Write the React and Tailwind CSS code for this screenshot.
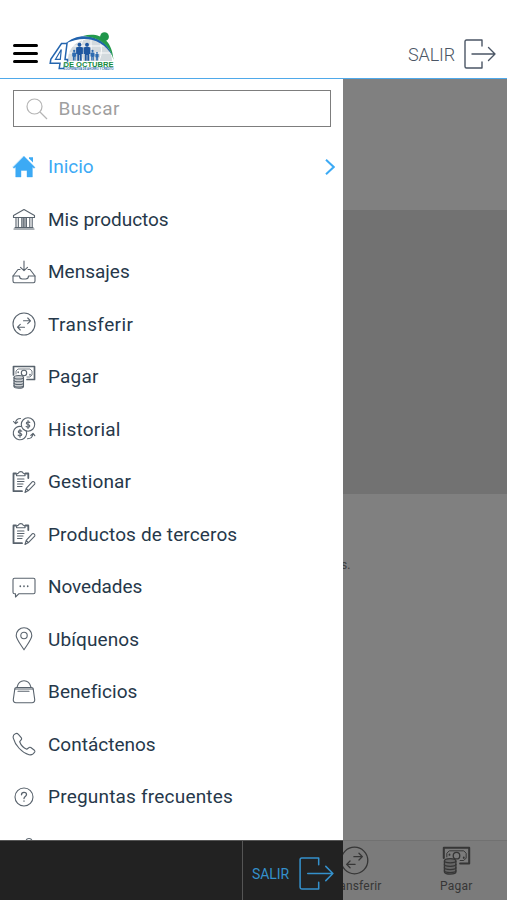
import { useState } from "react";

const FONT = "font-['Roboto','Noto_Sans',sans-serif]";

function Icon({ size = 24, className = "", children }) {
  return (
    <svg viewBox="0 0 24 24" width={size} height={size} fill="none" stroke="currentColor"
      strokeWidth="1.1" strokeLinecap="round" strokeLinejoin="round" className={`shrink-0 ${className}`}>
      {children}
    </svg>
  );
}

function HomeIcon() {
  return (
    <Icon>
      <path d="M12 1.3 23 12.4l-1 .9-1.6-1.3v10H15v-6.5H9V22H3.7V12L2 13.3l-1-.9Z" fill="currentColor" strokeWidth="0.4" />
      <path d="M17 2.3h4v5.2l-4-4Z" fill="currentColor" stroke="none" />
    </Icon>
  );
}

function BankIcon() {
  return (
    <Icon>
      <path d="M12 2.500 1.500 8.500v2h21v-2ZM2 22h20M3 20.500h18" />
      <path d="M4 11v9M6.300 11v9M9.800 11v9M11.300 11v9M12.900 11v9M14.400 11v9M17.800 11v9M20.200 11v9" />
    </Icon>
  );
}

function InboxIcon() {
  return (
    <Icon>
      <path d="M12 1v9.500M8.500 7.300l3.500 3.400 3.500-3.400" />
      <path d="M8 9.500H6L1 16v5c0 1 .5 1.700 1.500 1.700h19c1 0 1.500-.7 1.500-1.700v-5l-5-6.500h-2" />
      <path d="M1 16h6.500c0 1.800 1.200 3 2.800 3h3.400c1.600 0 2.800-1.200 2.800-3H23" />
    </Icon>
  );
}

function TransferIcon({ size }) {
  return (
    <Icon size={size}>
      <circle cx="12" cy="12" r="11" />
      <path d="M11.500 8.800H18M15.700 6l2.800 2.800-2.800 2.800M12.500 15.200H6M8.300 12.400l-2.800 2.800L8.300 18" />
    </Icon>
  );
}

function PayIcon({ size }) {
  return (
    <Icon size={size}>
      <path d="M1.500 10V1.500h21v13H15" strokeWidth="1.700" />
      <path d="M4 9V6l2-2h12l2 2v4l-2 2h-3" strokeWidth="0.800" />
      <circle cx="12" cy="8" r="2.700" />
      <path d="M6.200 7v.4M18 9.500v.4" strokeWidth="1.500" />
      <path d="M2 12.500c0-2.700 9.500-2.700 9.500 0v9c0 2.300-9.500 2.300-9.500 0Z" fill="currentColor" fillOpacity="0.3" />
      <path d="M2 12.500c0 2 9.500 2 9.500 0M2 15.300c0 2 9.500 2 9.500 0M2 18c0 2 9.500 2 9.500 0M2 20.500c0 2 9.500 2 9.500 0" />
    </Icon>
  );
}

function HistoryIcon() {
  return (
    <Icon>
      <circle cx="16" cy="7.500" r="6.700" />
      <path d="M9.300 9.500a6.700 6.700 0 1 0 5.300 7.500c.1-1 0-1.700-.3-2.800" />
      <path d="M17.800 5.500c-1-.9-3.500-.8-3.500.7 0 1.700 3.500.9 3.500 2.700 0 1.500-2.600 1.600-3.700.5M16 3.500v8" />
      <path d="M9.800 14.200c-1-.9-3.500-.8-3.500.7 0 1.700 3.500.9 3.500 2.700 0 1.500-2.600 1.600-3.700.5M8 12.200v8" />
      <path d="M8.500 1.500C5.500 1.500 3.800 3 3.500 6M1.500 4.500l2 2.200 2.200-1.700M15.500 21.700c3.500 0 5-1.200 5.500-4.700M18.800 18.500l2.200-2.200 1.800 2.400" />
    </Icon>
  );
}

function ClipboardIcon() {
  return (
    <Icon>
      <path d="M4 3.500H1.500v17.700H10M13.500 3.500h2.800V8" strokeWidth="1.800" />
      <path d="M4.500 5.800C4.300 4.200 5 3.500 6.300 3.300a2.700 2.700 0 0 1 5 0c1.400.2 2 1 1.800 2.500Z" />
      <path d="M5.500 9H12M5.500 11.500H12M5.500 14h5.500M5.500 16.500h4.500" />
      <path d="m13 22.500 1.200-4.200 6-6.500c1.500-.9 3.300.8 2.500 2.300l-6.300 6.500ZM14.200 18.300l2.200 2.300" />
    </Icon>
  );
}

function ChatIcon() {
  return (
    <Icon>
      <path d="M2.500 3.300h19c.9 0 1.500.6 1.500 1.500v12.400c0 .9-.6 1.500-1.500 1.500H7L3.500 22v-3.300h-1c-.9 0-1.500-.6-1.500-1.500V4.800c0-.9.6-1.500 1.500-1.500Z" />
      <path d="M8.300 11.200v.1M12 11.200v.1M15.700 11.200v.1" strokeWidth="1.700" />
    </Icon>
  );
}

function PinIcon() {
  return (
    <Icon>
      <path d="M12 22.800C8.500 17 4.200 12.200 4.200 8.500a7.800 7.800 0 0 1 15.600 0c0 3.700-4.300 8.500-7.800 14.300Z" />
      <circle cx="12" cy="8.500" r="3.200" />
    </Icon>
  );
}

function BagIcon() {
  return (
    <Icon>
      <path d="M2.800 9h18.400l1.500 10.500c.2 2-.9 3.200-2.700 3.200H4c-1.800 0-2.900-1.200-2.700-3.200Z" />
      <path d="M2.800 9c0-1 .7-1.500 1.700-1.500h15c1 0 1.700.5 1.700 1.500M5 7.300C6 3 8.500.7 12 .7s6 2.300 7 6.600" />
      <path d="M6 11.200h11" />
    </Icon>
  );
}

function PhoneIcon() {
  return (
    <Icon>
      <path d="M3.300 1.700C1.500 2.500.8 4 1.300 6.200 3 13 9.800 20.700 17 22.700c2.500.5 4.500-.5 5.700-2.700.3-.6.200-1.200-.3-1.700l-3.600-2.800c-.6-.4-1.200-.4-1.700 0l-2.300 1.700c-3-1.200-6-4.300-7.100-7.500l1.600-2c.4-.6.4-1.200.1-1.800L6.200 2.100C5.500 1.200 4.300 1.200 3.300 1.700Z" />
    </Icon>
  );
}

function HelpIcon() {
  return (
    <Icon>
      <circle cx="12" cy="12" r="9" />
      <path d="M9.500 9.800c0-3.300 5-3.200 5-.3 0 1.900-2.500 2-2.500 4M12 16v.2" strokeWidth="1.3" />
    </Icon>
  );
}

function LockIcon() {
  return (
    <Icon>
      <path d="M14 6V4.500a3 3 0 0 1 6 0V9M4 10h17v12H4Z" />
    </Icon>
  );
}

function ExitIcon({ className = "", width, height }) {
  return (
    <svg viewBox="0 0 32 30" width={width} height={height} fill="none" stroke="currentColor"
      strokeWidth="1.4" strokeLinecap="round" strokeLinejoin="round" preserveAspectRatio="none" className={`shrink-0 ${className}`}>
      <path d="M18 7V1H2.500Q1 1 1 2.500v25Q1 29 2.500 29H18v-6M8 15h23M24.500 8.500 31 15l-6.500 6.500" />
    </svg>
  );
}

function Person({ x, y, s, fill }) {
  return (
    <g transform={`translate(${x} ${y}) scale(${s})`} fill={fill}>
      <circle cx="0" cy="2" r="2.3" />
      <path d="M-4 5.300Q0 3.600 4 5.300V13H2.600V21H.4V14H-.4V21H-2.600V13H-4Z" />
    </g>
  );
}

function Logo() {
  return (
    <svg viewBox="0 0 67 41" width="67" height="41" className="-mb-[2px] shrink-0">
      <path d="M19 29C18 1 62 -1 63 29Z" fill="#d3dade" />
      <path d="M42 5v24M34 7q-5 11 0 22M50 7q5 11 0 22M22 14h38M19 21h43" stroke="#fff" strokeWidth="0.900" fill="none" />
      <path d="M16 12C29-1 56 2 63.500 24 53 6 34 3 16 12Z" fill="#2163ae" />
      <path d="M34 4C49 0 63 6 64.500 28 61 12 49 5 34 4Z" fill="#249a4c" />
      <circle cx="55.500" cy="4.700" r="4.400" fill="#20964a" />
      <Person x={30.5} y={11} s={0.85} fill="#1f57a0" />
      <Person x={38} y={11} s={0.85} fill="#1f57a0" />
      <Person x={25.2} y={18} s={0.5} fill="#2d6bb0" />
      <Person x={43.5} y={18} s={0.5} fill="#2d6bb0" />
      <Person x={48} y={20} s={0.4} fill="#2d6bb0" />
      <path d="M12.500 11.500h5.500L16 27.500h2.500v3.800h-3l-.8 5.200h-4.500l.8-5.200H1.200l.6-4Z" fill="#fff" stroke="#2465ae" strokeWidth="1.500" />
      <path d="m12.300 17.500-5.800 9.800h4.800Z" fill="#fff" stroke="#2465ae" strokeWidth="1.200" />
      <text x="14.500" y="35" fill="#168b41" stroke="#fff" strokeWidth="1" paintOrder="stroke" fontFamily="Liberation Sans" fontWeight="700" fontSize="6.800" textLength="50" lengthAdjust="spacingAndGlyphs">DE OCTUBRE</text>
      <text x="14.500" y="38.200" fill="#2867aa" fontFamily="Liberation Sans" fontWeight="700" fontSize="2.600" textLength="50" lengthAdjust="spacingAndGlyphs">COOPERATIVA DE AHORRO Y CREDITO</text>
    </svg>
  );
}

const ITEMS = [
  { label: "Inicio",                icon: HomeIcon,      cls: "tracking-[0px]" },
  { label: "Mis productos",         icon: BankIcon,      cls: "tracking-[-0.06px]" },
  { label: "Mensajes",              icon: InboxIcon,     cls: "tracking-[0px]" },
  { label: "Transferir",            icon: TransferIcon,  cls: "tracking-[0.4px]" },
  { label: "Pagar",                 icon: PayIcon,       cls: "tracking-[0.2px]" },
  { label: "Historial",             icon: HistoryIcon,   cls: "tracking-[0.2px]" },
  { label: "Gestionar",             icon: ClipboardIcon, cls: "tracking-[0.15px]" },
  { label: "Productos de terceros", icon: ClipboardIcon, cls: "tracking-[0.13px]" },
  { label: "Novedades",             icon: ChatIcon,      cls: "tracking-[-0.1px]" },
  { label: "Ubíquenos",             icon: PinIcon,       cls: "tracking-[0.1px]" },
  { label: "Beneficios",            icon: BagIcon,       cls: "tracking-[0.05px]" },
  { label: "Contáctenos",           icon: PhoneIcon,     cls: "tracking-[0px]" },
  { label: "Preguntas frecuentes",  icon: HelpIcon,      cls: "tracking-[0.2px]" },
];

function MenuItem({ item, active, onSelect }) {
  const ItemIcon = item.icon;
  return (
    <button
      onClick={onSelect}
      className={`flex h-[52.5px] w-full shrink-0 items-center pl-3 pr-2 text-left
        ${active ? "text-[#3caaf5]" : "text-[#26384a]"}`}
    >
      <span className={active ? "" : "text-[#59636d]"}><ItemIcon /></span>
      <span className={`ml-3 whitespace-nowrap pt-px text-[19px] leading-6 ${item.cls}`}>{item.label}</span>
      {active && (
        <svg viewBox="0 0 10 16" width="10" height="16" fill="none" className="ml-auto">
          <path d="m1 .8 7.7 7.200L1 15.200" stroke="currentColor" strokeWidth="2" />
        </svg>
      )}
    </button>
  );
}

export default function App() {
  const [selected, setSelected] = useState("Inicio");

  return (
    <div className={`${FONT} flex h-[900px] w-[507px] flex-col overflow-hidden bg-white`}>
      {/* Top bar */}
      <header className="flex h-[79px] shrink-0 items-end border-b border-[#4fa9ea] pb-[7px] pl-[13px] pr-[11px]">
        <button className="mb-2 flex w-[25px] flex-col gap-[5px]" aria-label="Menu">
          <span className="h-[3px] rounded-sm bg-black" />
          <span className="h-[3px] rounded-sm bg-black" />
          <span className="h-[3px] rounded-sm bg-black" />
        </button>
        <div className="ml-[11px]"><Logo /></div>
        <button className="mb-[2px] ml-auto flex items-center gap-[9px] text-[#4b5665]">
          <span className="text-[18px] font-light tracking-[-0.15px]">SALIR</span>
          <ExitIcon width={32} height={30} />
        </button>
      </header>

      <div className="relative flex min-h-0 flex-1 flex-col bg-[#808080]">
        {/* Dimmed page */}
        <div className="h-[131px] shrink-0" />
        <div className="h-[284px] shrink-0 bg-[#727272]" />
        <p className="mt-[63px] pl-[341px] text-[12px] leading-4 text-[#3e3e3e]">s.</p>
        <nav className="mt-auto grid h-[60px] grid-cols-5 border-t border-[#717171] bg-[#7b7b7b] text-[12px] text-[#363636]">
          <div className="col-start-4 flex flex-col items-center pt-[5px]">
            <TransferIcon size={29} />
            <span className="mt-[2px] tracking-[0.2px]">Transferir</span>
          </div>
          <div className="flex flex-col items-center pt-[5px]">
            <PayIcon size={29} />
            <span className="mt-[2px] tracking-[0.2px]">Pagar</span>
          </div>
        </nav>

        {/* Drawer */}
        <aside className="absolute inset-y-0 left-0 flex w-[343px] flex-col bg-white">
          <label className="mx-[12.5px] mt-[11px] flex h-[37px] shrink-0 items-center border-[1.5px] border-[#7d7d7d] pl-3">
            <svg viewBox="0 0 22 22" width="22" height="22" fill="none" stroke="#b5b5b5" strokeWidth="1.2">
              <circle cx="8.500" cy="8.500" r="7.500" />
              <path d="m14 14 7 7" />
            </svg>
            <input
              placeholder="Buscar"
              className="ml-[11px] mt-[2px] w-52 bg-transparent text-[19px] tracking-[0.4px] outline-none placeholder:text-[#9f9f9f]"
            />
          </label>
          <div className="mt-[13.5px] flex min-h-0 flex-1 flex-col overflow-hidden">
            {ITEMS.map((item) => (
              <MenuItem
                key={item.label}
                item={item}
                active={selected === item.label}
                onSelect={() => setSelected(item.label)}
              />
            ))}
            <div className="flex h-[52.5px] shrink-0 items-center pl-3 text-[#59636d]"><LockIcon /></div>
          </div>
          <footer className="flex h-[60px] shrink-0 border-t border-[#555] bg-[#222] text-[#3490cb]">
            <button className="ml-auto flex w-[101px] items-center justify-between border-l-[1.5px] border-[#555] pl-[9px] pr-[9px] pt-[6px]">
              <span className="pt-[2px] text-[14px] tracking-[-0.1px]">SALIR</span>
              <ExitIcon width={35} height={33} />
            </button>
          </footer>
        </aside>
      </div>
    </div>
  );
}
